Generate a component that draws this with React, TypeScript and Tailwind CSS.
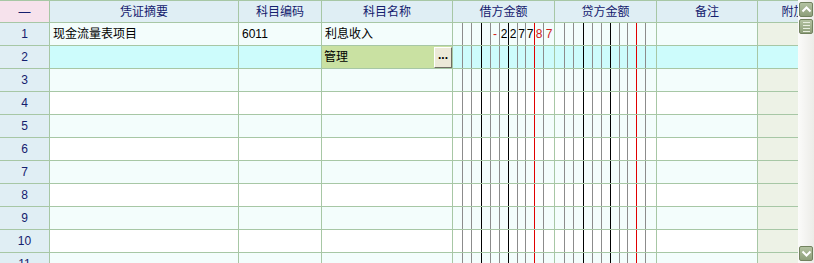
import React from "react";

const font = { fontFamily: '"Liberation Sans", "Noto Sans CJK SC", sans-serif' };

// widths include the 1px right line of each digit cell
const digitW = [
  "w-[10px]", "w-[9px]", "w-[10px]", "w-[9px]", "w-[9px]", "w-[9px]",
  "w-[9px]", "w-[8px]", "w-[9px]", "w-[9px]", "w-[11px]",
];
const digitLine = [
  "border-r border-[#8c8c8c]", "border-r border-[#8c8c8c]", "border-r border-black",
  "border-r border-[#8c8c8c]", "border-r border-[#8c8c8c]", "border-r border-black",
  "border-r border-[#8c8c8c]", "border-r border-[#8c8c8c]", "border-r border-[#e00000]",
  "border-r border-[#8c8c8c]", "border-r border-[#a7c7a5]",
];

type Digit = { ch: string; red?: boolean };

function Money({ digits }: { digits?: (Digit | null)[] }) {
  return (
    <div className="flex h-full w-[102px] shrink-0">
      {digitW.map((w, i) => {
        const d = digits ? digits[i] : null;
        return (
          <div
            key={i}
            className={`${w} ${digitLine[i]} flex h-full items-center justify-center text-[12px] leading-none ${d?.red ? "text-[#d02020]" : "text-black"}`}
          >
            {d ? d.ch : ""}
          </div>
        );
      })}
    </div>
  );
}

const cell = "h-full shrink-0 border-r border-[#a7c7a5] flex items-center";

function Row({ n }: { n: number }) {
  const selected = n === 2;
  const bg = selected ? "bg-[#cdfcfc]" : n % 2 === 1 ? "bg-[#f3fdfc]" : "bg-white";
  const extraBg = selected ? "bg-[#cdfcfc]" : "bg-[#edf2e6]";
  const debit: (Digit | null)[] | undefined =
    n === 1
      ? [null, null, null, null, { ch: "-", red: true }, { ch: "2" }, { ch: "2" }, { ch: "7" }, { ch: "7" }, { ch: "8", red: true }, { ch: "7", red: true }]
      : undefined;
  return (
    <div className={`flex h-[23px] shrink-0 border-b border-[#a7c7a5] ${bg}`}>
      <div className={`${cell} w-[50px] justify-center bg-[#e0eef4] text-[12px] text-[#14206e]`}>{n}</div>
      <div className={`${cell} w-[189px] pl-[3px] text-[12px] text-black`}>{n === 1 ? "现金流量表项目" : ""}</div>
      <div className={`${cell} w-[83px] pl-[3px] text-[12px] text-black`}>{n === 1 ? "6011" : ""}</div>
      {n === 2 ? (
        <div className={`${cell} w-[131px] bg-[#c9e1a2] text-[12px] text-black`}>
          <span className="flex-1 pl-[2px]">管理</span>
          <div className="flex h-[21px] w-[18px] items-center justify-center border border-t-white border-l-white border-b-[#6f6d62] border-r-[#6f6d62] bg-[#ece9d8] pb-[4px] text-[12px] font-bold leading-none text-black">
            ...
          </div>
        </div>
      ) : (
        <div className={`${cell} w-[131px] pl-[3px] text-[12px] text-black`}>{n === 1 ? "利息收入" : ""}</div>
      )}
      <Money digits={debit} />
      <Money />
      <div className={`${cell} w-[101px]`} />
      <div className={`${cell} w-[72px] ${extraBg}`} />
    </div>
  );
}

function Chevron({ up }: { up?: boolean }) {
  return (
    <svg width="11" height="7" viewBox="0 0 11 7">
      <path
        d={up ? "M1.5 5.5 L5.5 1.5 L9.5 5.5" : "M1.5 1.5 L5.5 5.5 L9.5 1.5"}
        fill="none"
        stroke="white"
        strokeWidth="2"
      />
    </svg>
  );
}

const btn =
  "mx-[1px] flex h-[15px] w-[14px] items-center justify-center rounded-[2px] border border-[#72825f] bg-gradient-to-b from-[#b3c2a1] to-[#8e9f7b]";

export default function App() {
  const headers = [
    { t: "—", w: "w-[50px] bg-[#f6e2ec]" },
    { t: "凭证摘要", w: "w-[189px]" },
    { t: "科目编码", w: "w-[83px]" },
    { t: "科目名称", w: "w-[131px]" },
    { t: "借方金额", w: "w-[102px]" },
    { t: "贷方金额", w: "w-[102px]" },
    { t: "备注", w: "w-[101px]" },
    { t: "附加", w: "w-[72px]" },
  ];
  return (
    <div className="flex h-[263px] w-[814px] overflow-hidden bg-white" style={font}>
      <div className="flex w-[798px] shrink-0 flex-col overflow-hidden">
        <div className="flex h-[23px] shrink-0 border-y border-[#a7c7a5] bg-[#dfeef4]">
          {headers.map((h) => (
            <div
              key={h.t}
              className={`${h.w} flex h-full shrink-0 items-center justify-center border-r border-[#a7c7a5] text-[12px] text-[#14206e]`}
            >
              {h.t}
            </div>
          ))}
        </div>
        {Array.from({ length: 11 }, (_, i) => (
          <Row key={i} n={i + 1} />
        ))}
      </div>
      <div className="flex w-[16px] shrink-0 flex-col justify-between bg-gradient-to-r from-[#fbfbfa] to-[#ecece8] py-[2px]">
        <div className="flex flex-col gap-[2px]">
          <div className={btn}>
            <Chevron up />
          </div>
          <div className={`${btn} flex-col gap-[2px]`}>
            <div className="h-px w-[7px] bg-[#e8eee0]" />
            <div className="h-px w-[7px] bg-[#e8eee0]" />
            <div className="h-px w-[7px] bg-[#e8eee0]" />
            <div className="h-px w-[7px] bg-[#e8eee0]" />
          </div>
        </div>
        <div className={btn}>
          <Chevron />
        </div>
      </div>
    </div>
  );
}
